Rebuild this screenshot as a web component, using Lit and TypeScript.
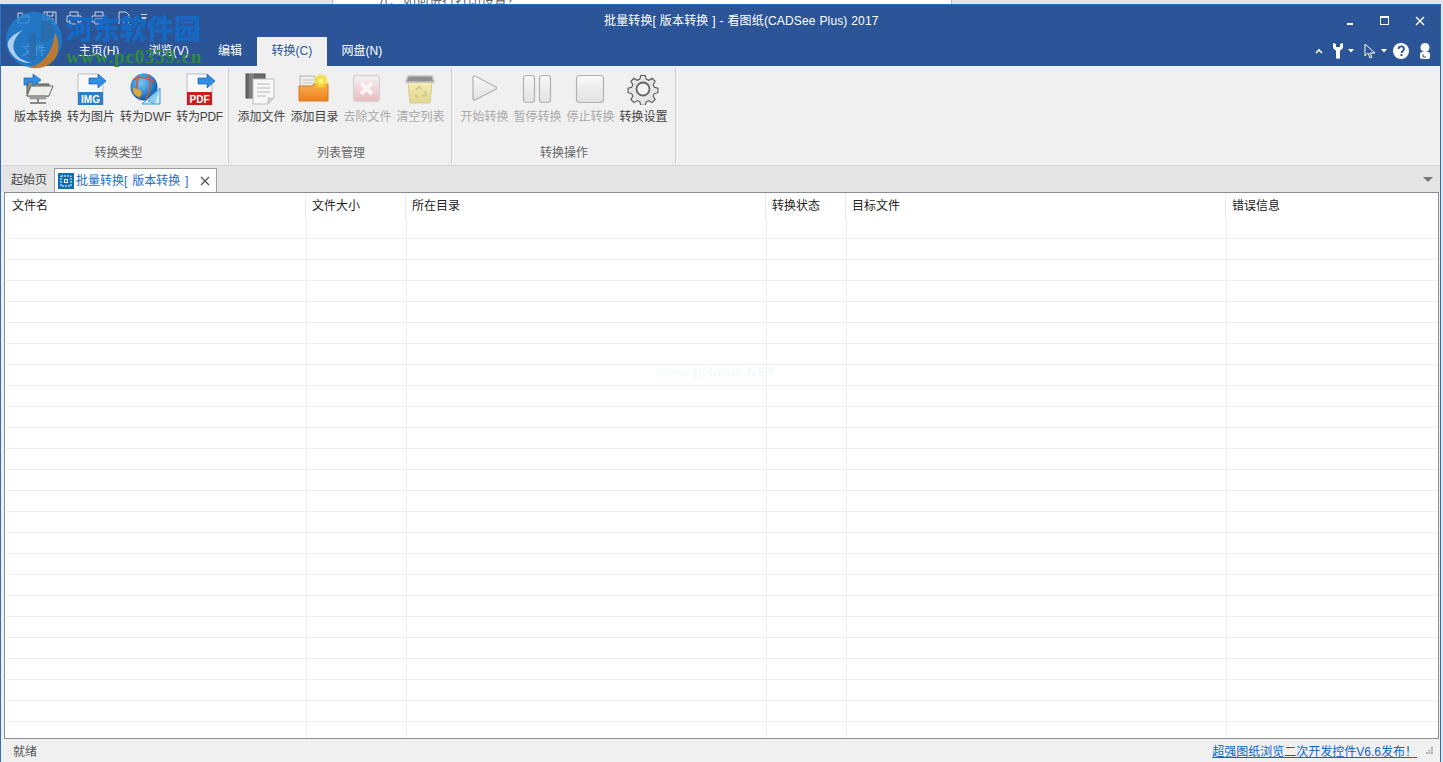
import { LitElement, css, html, svg } from 'lit';
import { customElement } from 'lit/decorators.js';

// 25 rows, the last one is clipped by the table's bottom edge
const rows = Array.from({ length: 25 });
const columns = [
  { title: '文件名', width: 301 },
  { title: '文件大小', width: 100 },
  { title: '所在目录', width: 360 },
  { title: '转换状态', width: 80 },
  { title: '目标文件', width: 380 },
  { title: '错误信息', width: 0 },
];

const arrow = svg`<path d="M14 5h9V1l8 7-8 7v-4h-9z" fill="#2f8fe6" stroke="#1d5fa8" stroke-width=".7"/>`;

const docIcon = (band: string, label: string) => svg`
  <path d="M3 1h19l6 6v25H3z" fill="#f7f8fa" stroke="#b9bcc2"/>
  <rect x="3" y="19" width="25" height="13" fill="${band}"/>
  <text x="15.5" y="29.5" text-anchor="middle" font-family="Liberation Sans" font-size="10" font-weight="700" fill="#fff">${label}</text>
  ${arrow}`;

const icons: Record<string, unknown> = {
  version: svg`
    <path d="M5 8h9l2 3h11v12H5z" fill="#8d8d84" stroke="#555"/>
    <path d="M9 13h22l-4 10H5z" fill="#eeeeea" stroke="#666"/>
    <rect x="8" y="23" width="16" height="3" fill="#a2a2a2" stroke="#777" stroke-width=".5"/>
    <path d="M16 26v3M8 30h16" stroke="#666" stroke-width="1.5"/>
    <path d="M2 5h9V1l8 6-8 6V9H6v3H2z" fill="#2f8fe6" stroke="#1d5fa8" stroke-width=".7"/>`,
  img: docIcon('#2a7fc8', 'IMG'),
  dwf: svg`
    <defs><radialGradient id="globe" cx=".4" cy=".35" r=".7"><stop offset="0" stop-color="#7cc6f2"/><stop offset=".7" stop-color="#1e78c8"/><stop offset="1" stop-color="#0e4d95"/></radialGradient></defs>
    <circle cx="14" cy="14" r="13.5" fill="url(#globe)"/>
    <path d="M3 7c6-4 15-3 21 2M9 2c-3 7-3 16 1 24M19 2c2 7 2 16-3 24" fill="none" stroke="#e1502a" stroke-width="1.4"/>
    <path d="M3 14c3 3 6 1 8 4s-1 6-2 6c-5-1-7-6-6-10z" fill="#d9a93a"/>
    <path d="M30 15v16H12z" fill="#cfe9f7" stroke="#3b95cf"/>
    <path d="M30 15 18 28l7 3" fill="#8fcdee" stroke="#3b95cf" stroke-width=".7"/>`,
  pdf: docIcon('#c4201d', 'PDF'),
  addFile: svg`
    <rect x="1" y="1" width="19" height="24" fill="#66686a" stroke="#4c4d4f"/>
    <rect x="4" y="1" width="5" height="24" fill="#7e7f81"/>
    <path d="M8 6h21v19l-6 6H8z" fill="#f7f7f7" stroke="#bdbdbd"/>
    <path d="M12 11h13M12 15h13M12 19h13M12 23h9" stroke="#b7b7b7"/>
    <path d="M23 31v-6h6z" fill="#d5d5d5" stroke="#b5b5b5" stroke-width=".6"/>`,
  addDir: svg`
    <defs>
      <linearGradient id="fold" x1="0" y1="0" x2="0" y2="1"><stop offset="0" stop-color="#f9b04d"/><stop offset="1" stop-color="#ec7f1d"/></linearGradient>
      <radialGradient id="spark"><stop offset="0" stop-color="#fff8a8"/><stop offset=".5" stop-color="#f3dc30"/><stop offset="1" stop-color="#f3dc30" stop-opacity="0"/></radialGradient>
    </defs>
    <path d="M2 3h14l3 4h7v7H2z" fill="#eeeeea" stroke="#b5b5ac"/>
    <path d="M5 7h14M5 10h14" stroke="#c8c8c0"/>
    <path d="M1 13h13l2-2h14v17H1z" fill="url(#fold)" stroke="#cf7d2b"/>
    <circle cx="23" cy="8" r="8" fill="url(#spark)"/>`,
  remove: svg`
    <defs><linearGradient id="rm" x1="0" y1="0" x2="0" y2="1"><stop offset="0" stop-color="#f3f3f3"/><stop offset="1" stop-color="#e9b9bd"/></linearGradient></defs>
    <rect x="2.5" y="2.5" width="26" height="26" rx="3" fill="url(#rm)" stroke="#d6d6d6" stroke-width="1.5"/>
    <path d="M10 10l11 11M21 10 10 21" stroke="#fbf5f5" stroke-width="4"/>`,
  clear: svg`
    <defs><linearGradient id="bin" x1="0" y1="0" x2="0" y2="1"><stop offset="0" stop-color="#f4eeb2"/><stop offset="1" stop-color="#e3d78d"/></linearGradient></defs>
    <path d="M4 9h24l-2 21H6z" fill="url(#bin)" stroke="#d2cb9e"/>
    <path d="M4 3h24l2 6H2z" fill="#8f8f8f" stroke="#c0c0c0" stroke-width="1.5"/>
    <path d="M12 17l3-3 3 2M21 18l1 4-4 1M11 22l3 3" fill="none" stroke="#cfc79a" stroke-width="2"/>`,
  play: svg`
    <defs><linearGradient id="ctl" x1="0" y1="0" x2="0" y2="1"><stop offset="0" stop-color="#fafafa"/><stop offset=".5" stop-color="#ececec"/><stop offset="1" stop-color="#e2e2e2"/></linearGradient></defs>
    <path d="M5 4c0-1 1-1.5 2-1l21 11c1 .6 1 1.4 0 2L7 27c-1 .5-2 0-2-1z" fill="url(#ctl)" stroke="#b2b2b2" stroke-width="1.2"/>`,
  pause: svg`
    <defs><linearGradient id="ctl2" x1="0" y1="0" x2="0" y2="1"><stop offset="0" stop-color="#fafafa"/><stop offset=".5" stop-color="#ececec"/><stop offset="1" stop-color="#e2e2e2"/></linearGradient></defs>
    <rect x="2.5" y="2.5" width="11" height="27" rx="3" fill="url(#ctl2)" stroke="#b2b2b2" stroke-width="1.2"/>
    <rect x="18.5" y="2.5" width="11" height="27" rx="3" fill="url(#ctl2)" stroke="#b2b2b2" stroke-width="1.2"/>`,
  stop: svg`
    <defs><linearGradient id="ctl3" x1="0" y1="0" x2="0" y2="1"><stop offset="0" stop-color="#fafafa"/><stop offset=".5" stop-color="#ececec"/><stop offset="1" stop-color="#e2e2e2"/></linearGradient></defs>
    <rect x="2.5" y="2.5" width="27" height="27" rx="3" fill="url(#ctl3)" stroke="#b2b2b2" stroke-width="1.2"/>`,
  gear: svg`
    <path d="M13.5 1h5l1 4 3 1.3 3.5-2.2 3.5 3.5-2.2 3.5 1.3 3 4 1v5l-4 1-1.3 3 2.2 3.5-3.5 3.5-3.5-2.2-3 1.3-1 4h-5l-1-4-3-1.3-3.5 2.2-3.5-3.5 2.2-3.5-1.3-3-4-1v-5l4-1 1.3-3-2.2-3.5 3.5-3.5 3.5 2.2 3-1.3z" transform="translate(1.6 1.6) scale(.9)" fill="#e6e6e6" stroke="#555" stroke-width="1.2"/>
    <circle cx="16" cy="16" r="6.5" fill="#f3f3f3" stroke="#666" stroke-width="1.8"/>`,
};

type RibbonButton = { icon: string; label: string; disabled?: boolean };
const groups: { title: string; buttons: RibbonButton[] }[] = [
  {
    title: '转换类型',
    buttons: [
      { icon: 'version', label: '版本转换' },
      { icon: 'img', label: '转为图片' },
      { icon: 'dwf', label: '转为DWF' },
      { icon: 'pdf', label: '转为PDF' },
    ],
  },
  {
    title: '列表管理',
    buttons: [
      { icon: 'addFile', label: '添加文件' },
      { icon: 'addDir', label: '添加目录' },
      { icon: 'remove', label: '去除文件', disabled: true },
      { icon: 'clear', label: '清空列表', disabled: true },
    ],
  },
  {
    title: '转换操作',
    buttons: [
      { icon: 'play', label: '开始转换', disabled: true },
      { icon: 'pause', label: '暂停转换', disabled: true },
      { icon: 'stop', label: '停止转换', disabled: true },
      { icon: 'gear', label: '转换设置' },
    ],
  },
];

@customElement('app-root')
export class AppRoot extends LitElement {
  static styles = css`
    :host {
      display: flex;
      flex-direction: column;
      position: relative;
      width: 1443px;
      height: 762px;
      overflow: hidden;
      background: #e4e4e4;
      font-family: 'Liberation Sans', 'Noto Sans CJK SC', sans-serif;
      font-size: 12px;
      color: #444;
    }

    /* sliver of the window behind, only its last pixels show */
    .behind {
      height: 4px;
      flex: none;
      overflow: hidden;
      padding-left: 332px;
    }

    .behind div {
      box-sizing: border-box;
      width: 620px;
      height: 4px;
      background: #fff;
      border-left: 1px solid #bbb;
      border-right: 1px solid #bbb;
      padding-left: 44px;
      font-size: 13px;
      line-height: 1px;
      color: #666;
      overflow: hidden;
      white-space: nowrap;
    }

    .window {
      flex: 1;
      min-height: 0;
      margin-right: 2px;
      border-top: 1px solid #1a6fc9;
      border-left: 1px solid #2d6fc0;
      border-right: 1px solid #1a6fc9;
      box-sizing: border-box;
      display: flex;
      flex-direction: column;
      background: #f0f0f0;
    }

    .head {
      height: 61px;
      flex: none;
      background: #2b5597;
      color: #fff;
      display: flex;
      flex-direction: column;
    }

    .titlebar {
      height: 32px;
      display: grid;
      grid-template-columns: 603px 1fr auto;
      align-items: center;
    }

    .qat {
      display: flex;
      align-items: center;
      gap: 9px;
      padding: 0 0 6px 16px;
      opacity: 0.75;
    }

    .qat svg {
      display: block;
    }

    .qat svg:first-child {
      margin-right: 3px;
    }

    .title {
      line-height: 16px;
      letter-spacing: 0.15px;
      word-spacing: 0.3px;
      color: #fff;
    }

    .winbtns {
      display: flex;
      align-items: center;
      gap: 19px;
      padding-right: 12px;
    }

    .winbtns svg,
    .tools svg {
      display: block;
    }

    .tabsrow {
      flex: 1;
      display: flex;
      align-items: flex-end;
      justify-content: space-between;
    }

    .tabs {
      display: flex;
      padding-left: 5px;
    }

    .tab {
      height: 29px;
      line-height: 28px;
      padding: 0 14.7px;
      color: #fff;
      white-space: nowrap;
    }

    .tab.first {
      width: 28px;
      padding: 0 14px 0 16px;
    }

    .tab.active {
      background: #f0f0f0;
      color: #2b5597;
    }

    .tools {
      display: flex;
      align-items: center;
      gap: 4px;
      height: 29px;
      padding: 0 9px 2px 0;
      box-sizing: border-box;
    }

    .ribbon {
      height: 100px;
      flex: none;
      display: flex;
      padding: 2px 0 0 5px;
      box-sizing: border-box;
      background: #f0f0f0;
      border-bottom: 1px solid #d4d4d4;
    }

    .group {
      height: 95px;
      box-sizing: border-box;
      padding: 0 7px 0 8px;
      border-right: 1px solid #d2d2d2;
      display: flex;
      flex-direction: column;
    }

    .group:first-child {
      padding-right: 5.5px;
    }

    .group:first-child .btn:last-child span {
      letter-spacing: -0.3px;
    }

    .buttons {
      display: flex;
      gap: 5px;
      flex: 1;
    }

    .btn {
      display: flex;
      flex-direction: column;
      align-items: center;
      padding-top: 5px;
      color: #444;
      white-space: nowrap;
    }

    .btn.disabled {
      color: #aaa;
    }

    .btn svg {
      display: block;
      width: 32px;
      height: 32px;
    }

    .btn span {
      line-height: 16px;
      margin-top: 4px;
    }

    .grouptitle {
      text-align: center;
      color: #666;
      line-height: 16px;
      padding-bottom: 2px;
    }

    .docbar {
      height: 26px;
      flex: none;
      display: flex;
      align-items: flex-end;
      background: #e5e5e5;
      padding-left: 4px;
      position: relative;
      z-index: 1;
    }

    .doc {
      height: 23px;
      line-height: 22px;
      padding: 0 6px;
      color: #444;
    }

    .doc.active {
      box-sizing: border-box;
      width: 163px;
      height: 24px;
      margin-left: 1px;
      padding: 0 0 0 3px;
      background: #fff;
      border: 1px solid #a0a0a0;
      border-bottom: none;
      color: #1a6fc9;
      display: flex;
      align-items: center;
      gap: 2px;
    }

    .doc.active span {
      flex: 1;
      word-spacing: 1.5px;
    }

    .doc.active svg {
      display: block;
    }

    .doc.active .close {
      margin-right: 6px;
    }

    .menu {
      position: absolute;
      right: 7px;
      top: 11px;
      width: 0;
      height: 0;
      border-left: 5px solid transparent;
      border-right: 5px solid transparent;
      border-top: 5px solid #777;
    }

    .table {
      flex: none;
      height: 547px;
      margin: 0 1px 0 3px;
      box-sizing: border-box;
      background: #fff;
      border: 1px solid #8a8f96;
      position: relative;
      overflow: hidden;
    }

    .thead {
      display: flex;
      height: 25px;
      color: #222;
    }

    .th {
      box-sizing: border-box;
      padding: 4px 0 0 6px;
      line-height: 17px;
      height: 25px;
      margin-top: 1px;
      border-right: 1px solid #e9e9e9;
      flex: none;
    }

    .th:first-child {
      padding-left: 7px;
    }

    .th:last-child {
      border-right: none;
      flex: 1;
    }

    .tr {
      display: flex;
      height: 21px;
      box-sizing: border-box;
      border-bottom: 1px solid #efefef;
      margin: 0 0 0 1px;
    }

    .td {
      box-sizing: border-box;
      border-right: 1px solid #f1f1f1;
      flex: none;
    }

    .td:last-child {
      border-right: none;
      flex: 1;
      margin-right: 2px;
    }

    .faint {
      position: absolute;
      left: 651px;
      top: 171px;
      font-size: 14.5px;
      font-weight: 700;
      color: #f5fafc;
    }

    .status {
      flex: 1;
      display: flex;
      justify-content: space-between;
      align-items: center;
      padding: 0 7px 0 12px;
      background: #f0f0f0;
      color: #555;
    }

    .status a {
      color: #0a66c8;
      text-decoration: underline;
      margin-left: auto;
      margin-right: 9px;
    }

    .grip {
      display: block;
    }

    .wm {
      position: absolute;
      left: 5px;
      top: 11px;
      pointer-events: none;
    }

    .wm svg {
      display: block;
    }

    .wm-name {
      position: absolute;
      left: 66px;
      top: 12px;
      font-family: 'Noto Sans CJK SC', serif;
      font-weight: 900;
      font-size: 27px;
      line-height: 32px;
      color: #1469c4;
      white-space: nowrap;
      pointer-events: none;
    }

    .wm-url {
      position: absolute;
      left: 66px;
      top: 47px;
      font-family: 'Liberation Serif', serif;
      font-weight: 700;
      font-size: 19px;
      line-height: 20px;
      letter-spacing: 0.8px;
      color: #2f8a3c;
      white-space: nowrap;
      pointer-events: none;
    }
  `;

  private cols() {
    return columns.map((c) => (c.width ? `width:${c.width}px` : ''));
  }

  protected render() {
    const widths = this.cols();
    return html`
      <div class="behind"><div>九、如何进行打印设置？</div></div>
      <div class="window">
        <div class="head">
          <div class="titlebar">
            <div class="qat">
              <svg width="14" height="14" viewBox="0 0 14 14" fill="none" stroke="#fff"><path d="M1 12V2h4l1 2h6v2M1 12l2-6h10l-2 6z"/></svg>
              <svg width="14" height="14" viewBox="0 0 14 14" fill="none" stroke="#fff"><path d="M1 1h12v12H1zM4 1v4h6V1M4 13V8h6v5"/></svg>
              <svg width="16" height="14" viewBox="0 0 16 14" fill="none" stroke="#fff"><path d="M4 5V1h8v4M1 5h14v6h-3M4 11H1V5M4 8h8v5H4z"/></svg>
              <svg width="16" height="14" viewBox="0 0 16 14" fill="none" stroke="#fff"><path d="M4 5V1h8v4M1 5h14v6h-3M4 11H1V5M4 8h8v5H4z"/></svg>
              <svg width="16" height="14" viewBox="0 0 16 14" fill="none" stroke="#fff"><path d="M3 13V1h7l3 3v3"/><circle cx="10" cy="10" r="3"/><path d="M12 12l3 2"/></svg>
              <svg width="7" height="8" viewBox="0 0 7 8" fill="#fff"><path d="M0 0h6v1H0zM0 3h6L3 7z"/></svg>
            </div>
            <div class="title">批量转换[ 版本转换 ] - 看图纸(CADSee Plus) 2017</div>
            <div class="winbtns">
              <svg width="16" height="12" viewBox="0 0 16 12"><rect x="5" y="8" width="6" height="2" fill="#fff"/></svg>
              <svg width="16" height="12" viewBox="0 0 16 12" fill="none" stroke="#fff"><rect x="3.5" y="1.5" width="8" height="8" stroke-width="1"/><path d="M3 2h9" stroke-width="2"/></svg>
              <svg width="16" height="12" viewBox="0 0 16 12" fill="none" stroke="#fff" stroke-width="1.4"><path d="M4 2l8 8M12 2l-8 8"/></svg>
            </div>
          </div>
          <div class="tabsrow">
            <div class="tabs">
              <div class="tab first">文件</div>
              <div class="tab">主页(H)</div>
              <div class="tab">浏览(V)</div>
              <div class="tab">编辑</div>
              <div class="tab active">转换(C)</div>
              <div class="tab">网盘(N)</div>
            </div>
            <div class="tools">
              <svg width="8" height="6" viewBox="0 0 8 6" fill="none" stroke="#fff" stroke-width="1.6"><path d="M1 5l3-3 3 3"/></svg>
              <svg width="12" height="16" viewBox="0 0 12 16" fill="#fff" style="margin-left:5px"><path d="M1 0v4c0 2 2 3 3 3.5V15c0 1 4 1 4 0V7.5C9 7 11 6 11 4V0L8 1v3H4V1z"/></svg>
              <svg width="6" height="4" viewBox="0 0 6 4" fill="#fff"><path d="M0 0h6L3 3.5z"/></svg>
              <svg width="13" height="16" viewBox="0 0 13 16" fill="#2b5597" stroke="#fff" style="margin-left:6px"><path d="M1 1v12l3-3 2 5 2-1-2-4h5z"/></svg>
              <svg width="6" height="4" viewBox="0 0 6 4" fill="#fff"><path d="M0 0h6L3 3.5z"/></svg>
              <svg width="16" height="16" viewBox="0 0 16 16" style="margin-left:2px"><circle cx="8" cy="8" r="8" fill="#fff"/><path d="M5.5 6c0-3.5 5.5-3.5 5.5 0 0 2-2.5 2-2.5 4" fill="none" stroke="#2b5597" stroke-width="1.8"/><rect x="7.5" y="11" width="2" height="2" fill="#2b5597"/></svg>
              <svg width="12" height="16" viewBox="0 0 12 16" fill="#fff" style="margin-left:6px"><circle cx="6" cy="4.5" r="4.5"/><rect x="1" y="9" width="10" height="7" rx="2"/><path d="M4 11v3h3" fill="none" stroke="#2b5597"/></svg>
            </div>
          </div>
        </div>

        <div class="ribbon">
          ${groups.map(
            (g) => html`
              <div class="group">
                <div class="buttons">
                  ${g.buttons.map(
                    (b) => html`
                      <div class="btn ${b.disabled ? 'disabled' : ''}">
                        <svg viewBox="0 0 32 32">${icons[b.icon]}</svg>
                        <span>${b.label}</span>
                      </div>
                    `,
                  )}
                </div>
                <div class="grouptitle">${g.title}</div>
              </div>
            `,
          )}
        </div>

        <div class="docbar">
          <div class="doc">起始页</div>
          <div class="doc active">
            <svg width="16" height="16" viewBox="0 0 16 16">
              <rect width="16" height="16" fill="#0f6fb0"/>
              <path d="M3 3h10v10H3z" fill="none" stroke="#fff" stroke-dasharray="2 1"/>
              <rect x="6" y="6" width="4" height="4" fill="#fff"/>
              <rect x="7" y="7" width="2" height="2" fill="#0f6fb0"/>
            </svg>
            <span>批量转换[ 版本转换 ]</span>
            <svg class="close" width="10" height="10" viewBox="0 0 10 10" fill="none" stroke="#555" stroke-width="1.3"><path d="M1 1l8 8M9 1 1 9"/></svg>
          </div>
          <div class="menu"></div>
        </div>

        <div class="table">
          <div class="thead">
            ${columns.map((c, i) => html`<div class="th" style=${widths[i]}>${c.title}</div>`)}
          </div>
          ${rows.map(
            () => html`
              <div class="tr">
                ${columns.map((_, i) => html`<div class="td" style=${widths[i]}></div>`)}
              </div>
            `,
          )}
          <div class="faint">www.pHome.NET</div>
        </div>

        <div class="status">
          <span>就绪</span>
          <a>超强图纸浏览二次开发控件V6.6发布！</a>
          <svg class="grip" width="7" height="7" viewBox="0 0 7 7" fill="#b4b4b4"><rect x="5" y="0" width="2" height="2"/><rect x="2.5" y="2.5" width="2" height="2"/><rect x="5" y="2.5" width="2" height="2"/><rect x="0" y="5" width="2" height="2"/><rect x="2.5" y="5" width="2" height="2"/><rect x="5" y="5" width="2" height="2"/></svg>
        </div>
      </div>

      <div class="wm">
        <svg width="58" height="58" viewBox="0 0 58 58">
          <circle cx="29" cy="29" r="28" fill="#1f7fd0" opacity=".8"/>
          <path d="M50 22c7 14 3 28-9 33-6 2.5-12 3-18 1 13-1 24-12 27-34z" fill="#c47a28" opacity=".95"/>
          <path d="M3 36c3 11 14 17 24 16-9-2-16-6-18-13-2-6 1-14 9-20C9 23 1 28 3 36z" fill="#d9ecfa" opacity=".75"/>
          <path d="M24 22h7v27h-7zM36 10h6c6 0 8 6 7 12s-6 9-11 9h-2z" fill="#2b6aa8" opacity=".8"/>
        </svg>
      </div>
      <div class="wm-name">河东软件园</div>
      <div class="wm-url">www.pc0359.cn</div>
    `;
  }
}
